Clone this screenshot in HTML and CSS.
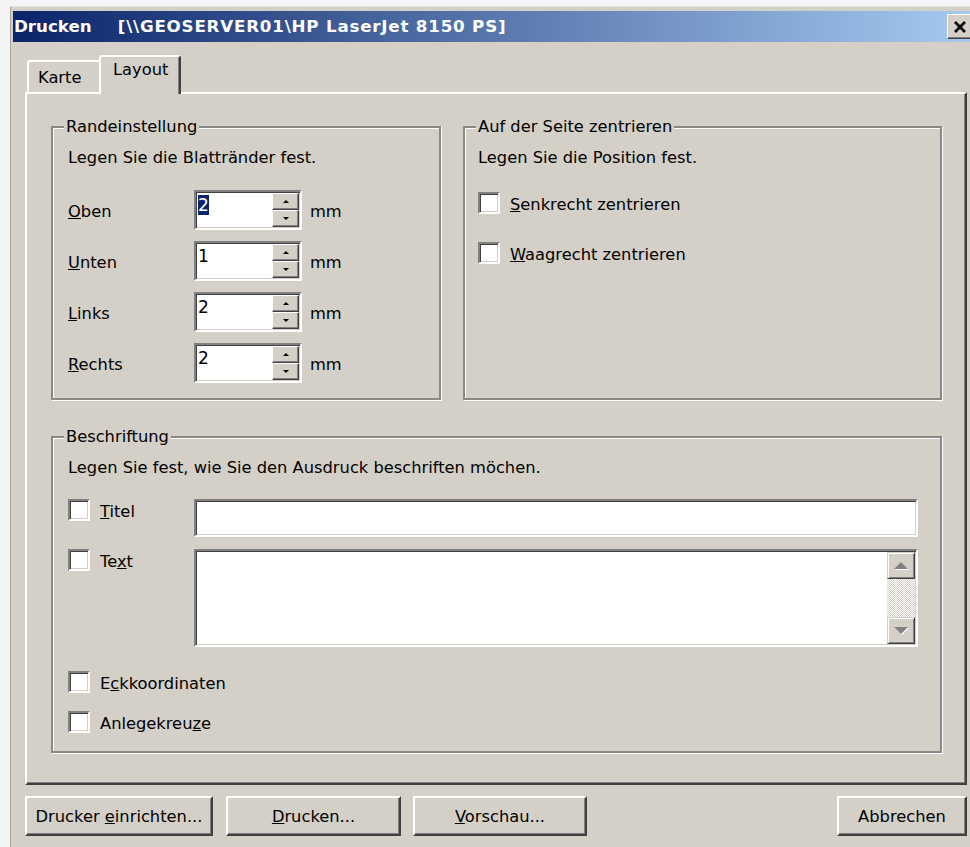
FILE: index.html
```html
<!DOCTYPE html>
<html lang="de">
<head>
<meta charset="utf-8">
<title>Drucken</title>
<link rel="stylesheet" href="styles.css">
</head>
<body>
<div class="window">
  <div class="titlebar">
    <span class="title-app">Drucken</span>
    <span class="title-printer">[\\GEOSERVER01\HP LaserJet 8150 PS]</span>
    <span class="close-btn">
      <svg width="14" height="12" viewBox="0 0 14 12"><path d="M2 1 L12 11 M12 1 L2 11" stroke="#000" stroke-width="2.6" fill="none"/></svg>
    </span>
  </div>

  <div class="client">
    <div class="tabs">
      <div class="tab">Karte</div>
      <div class="tab active">Layout</div>
    </div>

    <div class="panel">
      <div class="groups">
        <fieldset class="group margins">
          <legend>Randeinstellung</legend>
          <p class="hint">Legen Sie die Blattränder fest.</p>
          <div class="spin-list">
            <div class="spin-row">
              <span class="spin-label"><u>O</u>ben</span>
              <div class="spin">
                <span class="spin-value"><span class="selected">2</span></span>
                <span class="spin-btns"><span class="spin-btn up"></span><span class="spin-btn down"></span></span>
              </div>
              <span class="unit">mm</span>
            </div>
            <div class="spin-row">
              <span class="spin-label"><u>U</u>nten</span>
              <div class="spin">
                <span class="spin-value">1</span>
                <span class="spin-btns"><span class="spin-btn up"></span><span class="spin-btn down"></span></span>
              </div>
              <span class="unit">mm</span>
            </div>
            <div class="spin-row">
              <span class="spin-label"><u>L</u>inks</span>
              <div class="spin">
                <span class="spin-value">2</span>
                <span class="spin-btns"><span class="spin-btn up"></span><span class="spin-btn down"></span></span>
              </div>
              <span class="unit">mm</span>
            </div>
            <div class="spin-row">
              <span class="spin-label"><u>R</u>echts</span>
              <div class="spin">
                <span class="spin-value">2</span>
                <span class="spin-btns"><span class="spin-btn up"></span><span class="spin-btn down"></span></span>
              </div>
              <span class="unit">mm</span>
            </div>
          </div>
        </fieldset>

        <fieldset class="group centering">
          <legend>Auf der Seite zentrieren</legend>
          <p class="hint">Legen Sie die Position fest.</p>
          <div class="check-list">
            <div class="check"><span class="box"></span><span><u>S</u>enkrecht zentrieren</span></div>
            <div class="check"><span class="box"></span><span><u>W</u>aagrecht zentrieren</span></div>
          </div>
        </fieldset>
      </div>

      <fieldset class="group caption">
        <legend>Beschriftung</legend>
        <p class="hint">Legen Sie fest, wie Sie den Ausdruck beschriften möchen.</p>
        <div class="caption-grid">
          <div class="check"><span class="box"></span><span><u>T</u>itel</span></div>
          <div class="edit"></div>
          <div class="check"><span class="box"></span><span>Te<u>x</u>t</span></div>
          <div class="edit memo">
            <div class="scrollbar">
              <span class="scroll-btn"><span class="arrow up"></span></span>
              <span class="scroll-track"></span>
              <span class="scroll-btn"><span class="arrow down"></span></span>
            </div>
          </div>
        </div>
        <div class="check-list tight">
          <div class="check"><span class="box"></span><span>E<u>c</u>kkoordinaten</span></div>
          <div class="check"><span class="box"></span><span>Anlegekreu<u>z</u>e</span></div>
        </div>
      </fieldset>
    </div>

    <div class="buttons">
      <button class="btn setup">Drucker <u>e</u>inrichten...</button>
      <button class="btn print"><u>D</u>rucken...</button>
      <button class="btn preview"><u>V</u>orschau...</button>
      <button class="btn cancel">Abbrechen</button>
    </div>
  </div>
</div>
</body>
</html>
```

FILE: styles.css
```css
html, body {
  margin: 0;
  padding: 0;
  width: 970px;
  height: 847px;
  overflow: hidden;
  background: #f4f4f4;
}

body {
  font-family: "DejaVu Sans", Verdana, sans-serif;
  font-size: 16.3px;
  line-height: 19px;
  color: #000;
}

/* dialog frame */
.window {
  margin: 6px 0 0 10px;
  width: 962px;
  height: 836px;
  padding: 4px 0 0 2px;
  border-left: 1px solid #a9a69f;
  border-top: 1px solid #e4e2dc;
  background: #d4d0c8;
}

.titlebar {
  display: flex;
  align-items: center;
  height: 31px;
  padding-left: 1px;
  background: linear-gradient(to right, #0a246a, #a6caf0);
  color: #fff;
  font-weight: bold;
  font-size: 16.7px;
  white-space: nowrap;
}

.title-printer {
  margin-left: 26px;
  letter-spacing: 0.8px;
}

.close-btn {
  margin-left: auto;
  margin-right: 2px;
  width: 26px;
  height: 25px;
  box-sizing: border-box;
  display: flex;
  align-items: center;
  justify-content: center;
  background: #d4d0c8;
  border: 1px solid;
  border-color: #fff #404040 #404040 #fff;
  box-shadow: inset -1px -1px #808080;
}

.client {
  padding: 13px 8px 0 12px;
}

/* tab strip */
.tabs {
  display: flex;
  align-items: flex-end;
  height: 37px;
  padding-left: 2px;
}

.tab {
  box-sizing: border-box;
  height: 32px;
  width: 74px;
  padding: 6px 0 0 9px;
  border: 2px solid;
  border-bottom: 0;
  border-color: #fff #404040 transparent #fff;
  border-radius: 3px 3px 0 0;
}

.tab.active {
  position: relative;
  z-index: 1;
  height: 39px;
  width: 82px;
  margin-left: -2px;
  margin-bottom: -2px;
  padding: 3px 0 0 12px;
  background: #d4d0c8;
  box-shadow: inset -1px 0 #808080;
}

.panel {
  box-sizing: border-box;
  height: 693px;
  padding: 23px 23px 0 24px;
  border: 2px solid;
  border-color: #fff #404040 #404040 #fff;
  box-shadow: inset -1px -1px #808080;
}

.groups {
  display: grid;
  grid-template-columns: 390px 1fr;
  column-gap: 22px;
}

/* etched group boxes */
.group {
  margin: 0;
  min-width: 0;
  box-sizing: border-box;
  border: 2px solid #8a8883;
  box-shadow: inset 1px 1px #fff, 1px 1px #fff;
  padding: 12px 0 0 15px;
}

.group legend {
  padding: 0 2px;
  margin-left: -4px;
  line-height: 19px;
  background: #d4d0c8;
}

.margins,
.centering {
  height: 283px;
}

.centering {
  padding-left: 13px;
}

.centering legend {
  margin-left: -2px;
}

.caption {
  height: 326px;
  margin-top: 27px;
  padding-right: 22px;
}

.hint {
  margin: 0;
}

/* spin edits */
.spin-list {
  display: flex;
  flex-direction: column;
  gap: 11px;
  margin-top: 23px;
}

.spin-row {
  display: flex;
  align-items: center;
  height: 40px;
}

.spin-label {
  width: 126px;
  padding-top: 2px;
}

.spin {
  display: flex;
  width: 108px;
  height: 40px;
  box-sizing: border-box;
  padding: 1px;
  border: 2px solid;
  border-color: #808080 #fff #fff #808080;
  box-shadow: inset 1px 1px #404040, inset -1px -1px #d4d0c8;
  background: #fff;
}

.spin-value {
  flex: 1;
  padding: 1px 0 0 1px;
  font-size: 17px;
  line-height: 22px;
}

.selected {
  background: #0a246a;
  color: #fff;
}

.spin-btns {
  width: 27px;
  display: flex;
  flex-direction: column;
}

.spin-btn {
  flex: 1;
  box-sizing: border-box;
  display: flex;
  align-items: center;
  justify-content: center;
  background: #d4d0c8;
  border: 1px solid;
  border-color: #fff #404040 #404040 #fff;
  box-shadow: inset -1px -1px #808080;
}

.spin-btn::before {
  content: "";
  border-left: 3px solid transparent;
  border-right: 3px solid transparent;
}

.spin-btn.up::before {
  border-bottom: 3px solid #000;
}

.spin-btn.down::before {
  border-top: 3px solid #000;
}

.unit {
  margin-left: 8px;
  padding-top: 2px;
}

/* check boxes */
.check-list {
  display: flex;
  flex-direction: column;
  gap: 28px;
  margin-top: 25px;
}

.check-list.tight {
  gap: 18px;
  margin-top: 24px;
}

.check {
  display: flex;
  align-items: center;
  gap: 10px;
  height: 22px;
}

.check > span:last-child {
  padding-top: 2px;
}

.box,
.edit {
  box-sizing: border-box;
  border: 2px solid;
  border-color: #808080 #fff #fff #808080;
  box-shadow: inset 1px 1px #404040, inset -1px -1px #d4d0c8;
  background: #fff;
}

.box {
  width: 22px;
  height: 22px;
  flex: none;
}

.caption-grid {
  display: grid;
  grid-template-columns: 126px 1fr;
  row-gap: 12px;
  align-items: start;
  margin-top: 22px;
}

.edit {
  height: 38px;
}

.edit.memo {
  height: 98px;
  display: flex;
  justify-content: flex-end;
  padding: 1px;
}

.scrollbar {
  width: 28px;
  display: flex;
  flex-direction: column;
}

.scroll-btn {
  height: 27px;
  box-sizing: border-box;
  display: flex;
  align-items: center;
  justify-content: center;
  background: #d4d0c8;
  border: 1px solid;
  border-color: #d4d0c8 #404040 #404040 #d4d0c8;
  box-shadow: inset 1px 1px #fff, inset -1px -1px #808080;
}

.scroll-track {
  flex: 1;
  background-color: #fff;
  background-image: conic-gradient(#d4d0c8 25%, #fff 0 50%, #d4d0c8 0 75%, #fff 0);
  background-size: 2px 2px;
}

.arrow {
  width: 0;
  height: 0;
  border-left: 7px solid transparent;
  border-right: 7px solid transparent;
  filter: drop-shadow(1px 1px 0 #fff);
}

.arrow.up {
  border-bottom: 7px solid #808080;
}

.arrow.down {
  border-top: 7px solid #808080;
}

/* command buttons */
.buttons {
  display: flex;
  margin-top: 11px;
}

.btn {
  box-sizing: border-box;
  height: 40px;
  padding: 0;
  font: inherit;
  color: #000;
  background: #d4d0c8;
  border: 2px solid;
  border-color: #fff #404040 #404040 #fff;
  box-shadow: inset -1px -1px #808080;
}

.setup {
  width: 188px;
  margin-right: 13px;
}

.print {
  width: 175px;
  margin-right: 12px;
}

.preview {
  width: 174px;
}

.cancel {
  width: 130px;
  margin-left: auto;
}
```
